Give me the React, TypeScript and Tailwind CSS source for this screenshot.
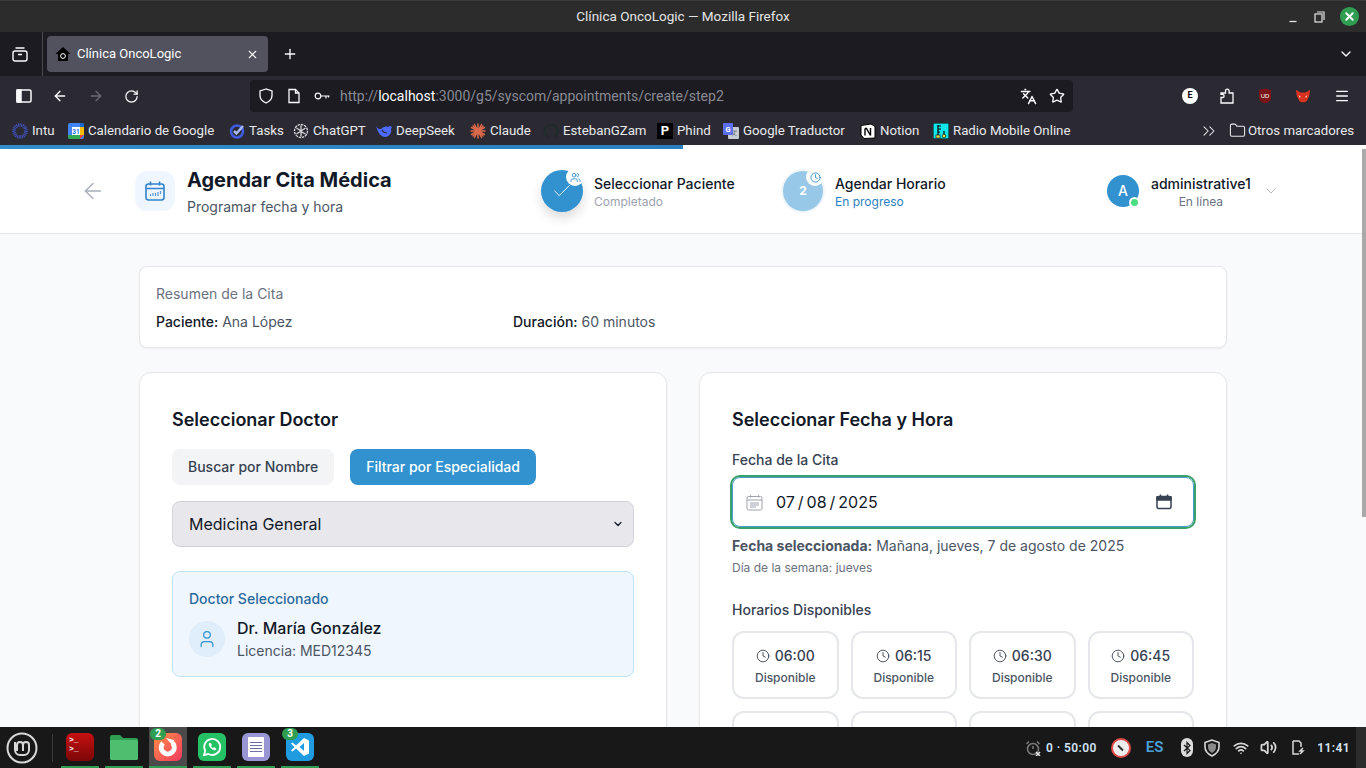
import {
  ArrowLeft,
  ArrowRight,
  Check,
  ChevronDown,
  ChevronsRight,
  Clock,
  Folder,
  Languages,
  Menu,
  Plus,
  RotateCw,
  Star,
  User,
  Users,
  Volume2,
  Wifi,
  X,
} from 'lucide-react';

const uiFont = "font-['Roboto',sans-serif]";

const bookmarks = [
  {
    name: 'Intu',
    w: 'w-[56px]',
    icon: (
      <svg width="16" height="16" viewBox="0 0 16 16" fill="none" stroke="#3f4fb8">
        <circle cx="8" cy="8" r="6" strokeWidth="3.5" strokeDasharray="1 0.6" />
      </svg>
    ),
  },
  {
    name: 'Calendario de Google',
    w: 'w-[161px]',
    icon: (
      <svg width="16" height="16" viewBox="0 0 16 16">
        <rect width="16" height="16" rx="2" fill="#4285f4" />
        <path d="M12 0h2a2 2 0 0 1 2 2v2h-4z" fill="#1967d2" />
        <path d="M12 4h4v8h-4z" fill="#fbbc04" />
        <path d="M0 12h12v4H2a2 2 0 0 1-2-2z" fill="#34a853" />
        <path d="M12 12h4l-4 4z" fill="#ea4335" />
        <rect x="4" y="4" width="8" height="8" fill="#fff" />
        <text x="8" y="10.500" textAnchor="middle" fontSize="6.500" fontWeight="700" fill="#1a73e8" fontFamily="Roboto">31</text>
      </svg>
    ),
  },
  {
    name: 'Tasks',
    w: 'w-[64px]',
    icon: (
      <svg width="16" height="16" viewBox="0 0 16 16" fill="none">
        <circle cx="8" cy="8.500" r="6" stroke="#3f5ce0" strokeWidth="2.500" />
        <path d="M5 8l2.500 2.500L14 3" stroke="#a9b8f5" strokeWidth="2.500" />
      </svg>
    ),
  },
  {
    name: 'ChatGPT',
    w: 'w-[83px]',
    icon: (
      <svg width="16" height="16" viewBox="0 0 16 16" fill="none" stroke="#d4d4d8" strokeWidth="1.300">
        <circle cx="8" cy="8" r="6.500" strokeDasharray="2.500 0.800" />
        <path d="M8 2.500v6l4.500 2.500M3.500 5l4.500 3-4.500 3M8 13.500V8l4.500-3" />
      </svg>
    ),
  },
  {
    name: 'DeepSeek',
    w: 'w-[94px]',
    icon: (
      <svg width="16" height="16" viewBox="0 0 16 16" fill="#4d6bfe">
        <path d="M0 3c2 3 3 3 5 3 2-2 5-3 7-2l2-1 2 1-1 2c1 4-2 8-6 8S2 10 0 3z" />
        <path d="M6 7c1 2 3 3 5 3" stroke="#2b2a33" strokeWidth="1.200" fill="none" />
      </svg>
    ),
  },
  {
    name: 'Claude',
    w: 'w-[73px]',
    icon: (
      <svg width="16" height="16" viewBox="0 0 16 16" stroke="#d9694a" strokeWidth="1.500" strokeLinecap="round">
        <path d="M8 1v14M1 8h14M3 3l10 10M13 3 3 13M4.500 1.500l7 13M11.500 1.500l-7 13M1.500 4.500l13 7M14.500 4.500l-13 7" />
      </svg>
    ),
  },
  {
    name: 'EstebanGZam',
    w: 'w-[114px]',
    icon: (
      <svg width="16" height="16" viewBox="0 0 16 16" fill="none" stroke="#1f2b2b" strokeWidth="2">
        <path d="M5 14a6.500 6.500 0 1 1 6 0" />
      </svg>
    ),
  },
  {
    name: 'Phind',
    w: 'w-[66px]',
    icon: (
      <span className="flex h-4 w-4 shrink-0 items-center justify-center bg-black text-[13px] font-bold leading-none text-white">P</span>
    ),
  },
  {
    name: 'Google Traductor',
    w: 'w-[137px]',
    icon: (
      <svg width="16" height="16" viewBox="0 0 16 16">
        <rect x="5" y="4" width="11" height="12" rx="1" fill="#c8ccd4" />
        <rect width="10" height="12" rx="1" fill="#5b6ff0" />
        <text x="5" y="9" textAnchor="middle" fontSize="7.500" fontWeight="700" fill="#fff" fontFamily="Roboto">G</text>
        <path d="M9.500 8h4.500M12 8c0 2-1 3.500-2.500 4.500M10 9.500c.5 1.500 2 3 3.500 3" stroke="#6b7280" strokeWidth="0.800" fill="none" />
      </svg>
    ),
  },
  {
    name: 'Notion',
    w: 'w-[73px]',
    icon: (
      <svg width="16" height="16" viewBox="0 0 16 16">
        <path d="M1 2.500 11 1l4 2.500V15L4 15.500 1 12z" fill="#fff" stroke="#000" strokeWidth="1" />
        <path d="M5 5.500v7M5 5.500h1.500l4 7M10.500 5v7.500" stroke="#000" strokeWidth="1.400" fill="none" />
      </svg>
    ),
  },
  {
    name: 'Radio Mobile Online',
    w: 'w-[142px]',
    icon: (
      <svg width="16" height="16" viewBox="0 0 16 16">
        <rect width="16" height="16" fill="#12e6ea" stroke="#000" />
        <path d="M5 2v10M5 3h3M5 6h3M5 9h2M11 8v5" stroke="#000" strokeWidth="1.200" fill="none" />
        <rect x="3" y="12" width="4" height="3" fill="#f4e04d" stroke="#000" strokeWidth="0.600" />
        <circle cx="11" cy="13" r="1.800" fill="#f4e04d" stroke="#000" strokeWidth="0.600" />
      </svg>
    ),
  },
];

const slots = ['06:00', '06:15', '06:30', '06:45'];

function TitleBar() {
  return (
    <div className="relative flex h-8 items-center justify-center border-t border-[#3a3a3a] bg-[#2c2c2c] text-[13.5px] text-[#e4e4e4]">
      Clínica OncoLogic — Mozilla Firefox
      <div className="absolute right-[7px] top-[6px] flex items-center gap-[15px] text-[#e4e4e4]">
        <svg width="12" height="12" viewBox="0 0 12 12" stroke="currentColor" strokeWidth="1.300">
          <path d="M2.500 10.500h7" />
        </svg>
        <svg width="11" height="12" viewBox="0 0 11 12" fill="none" stroke="currentColor" strokeWidth="1.200">
          <rect x="1" y="3" width="7" height="8" />
          <path d="M3 1h7v8" />
        </svg>
        <span className="flex h-[19px] w-[19px] items-center justify-center rounded-full bg-[#2f9e52] text-white">
          <X size={13} strokeWidth={3.5} />
        </span>
      </div>
    </div>
  );
}

function TabBar() {
  return (
    <div className="flex h-11 items-center bg-[#1c1b22] text-[#fbfbfe]">
      <div className="flex h-full w-[42px] shrink-0 items-center justify-center pr-[3px]">
        <svg width="16" height="16" viewBox="0 0 16 16" fill="none" stroke="currentColor" strokeWidth="1.400">
          <rect x="1" y="5" width="14" height="10" rx="2" />
          <path d="M3.500 2h9M6 8.500h4" />
        </svg>
      </div>
      <div className="h-full w-px bg-[#4a4a50]" />
      <div className="ml-1 flex h-9 w-[221px] items-center rounded bg-[#52525e] pl-2 pr-[9px] text-[13px]">
        <svg width="16" height="16" viewBox="0 0 16 16" className="mr-[6px] shrink-0" fill="#000">
          <path d="M8 1 0.500 8H3v7h10V8h2.500z" />
          <circle cx="8" cy="10" r="2.400" fill="none" stroke="#fff" strokeWidth="1" />
        </svg>
        <span className="flex-1">Clínica OncoLogic</span>
        <X size={13} strokeWidth={2} />
      </div>
      <Plus size={16} className="ml-[14px]" />
      <ChevronDown size={16} className="ml-auto mr-[12px]" />
    </div>
  );
}

function NavBar() {
  return (
    <div className="flex h-10 items-center bg-[#2b2a33] text-[#fbfbfe]">
      <svg width="16" height="16" viewBox="0 0 16 16" className="ml-4" fill="none" stroke="currentColor" strokeWidth="1.500">
        <rect x="1" y="2" width="14" height="12" rx="1.500" />
        <rect x="1" y="2" width="4" height="12" fill="currentColor" />
      </svg>
      <ArrowLeft size={16} className="ml-[20px]" />
      <ArrowRight size={16} className="ml-[20px] text-[#6b6a73]" />
      <RotateCw size={15} className="ml-[20px]" />
      <div className="ml-[111px] flex h-8 w-[823px] items-center rounded bg-[#1c1b22] pl-2 text-[14px]">
        <svg width="16" height="16" viewBox="0 0 16 16" fill="none" stroke="currentColor" strokeWidth="1.300">
          <path d="M8 1 2 3v4.500c0 3.500 2.500 6 6 7.500 3.500-1.500 6-4 6-7.500V3z" />
        </svg>
        <svg width="16" height="16" viewBox="0 0 16 16" className="ml-3" fill="none" stroke="currentColor" strokeWidth="1.300">
          <path d="M3 1.500h6.500l3.500 3.500v9.500H3zM9.500 1.500V5H13" />
        </svg>
        <svg width="16" height="16" viewBox="0 0 16 16" className="ml-3" fill="none" stroke="currentColor" strokeWidth="1.200">
          <circle cx="4" cy="8" r="2.800" />
          <path d="M7 8h8.500M12 8v2.500M14.500 8v1.500" />
        </svg>
        <span className="ml-[10px] text-[#8a8a92]">
          http://<span className="text-[#fbfbfe]">localhost</span>:3000/g5/syscom/appointments/create/step2
        </span>
        <Languages size={17} className="ml-auto" />
        <Star size={16} className="ml-[12px] mr-2" />
      </div>
      <div className="ml-auto mr-4 flex items-center gap-[22px]">
        <span className="flex h-4 w-4 items-center justify-center rounded-full bg-white text-[9px] font-bold text-black">E</span>
        <svg width="16" height="16" viewBox="0 0 16 16" className="-ml-px" fill="none" stroke="currentColor" strokeWidth="1.300">
          <path d="M2 15V9.500h1.500a1.600 1.600 0 0 0 0-3.200H2V5h4.500V3a1.800 1.800 0 0 1 3.600 0v2H14v10z" />
        </svg>
        <svg width="16" height="16" viewBox="0 0 16 16">
          <path d="M8 0.500 14 2v8c0 3-3 4.500-6 5.500C5 14.500 2 13 2 10V2z" fill="#7a1518" />
          <text x="8" y="10" textAnchor="middle" fontSize="6" fill="#fff" fontFamily="Liberation Sans">UD</text>
        </svg>
        <svg width="16" height="16" viewBox="0 0 18 16">
          <path d="M1 1l5 3h6l5-3-1 7-3 6-2 1H7l-2-1-3-6z" fill="#d9321f" />
          <path d="M4 7l3 2-2 1zM14 7l-3 2 2 1z" fill="#f7b9a8" />
        </svg>
        <Menu size={16} className="ml-px" />
      </div>
    </div>
  );
}

function BookmarksBar() {
  return (
    <div className="flex h-[29px] items-center bg-[#2b2a33] pl-3 pr-3 text-[13.25px] text-[#e9e9ec]">
      <div className="flex items-center">
        {bookmarks.map((b) => (
          <div key={b.name} className={`flex items-center gap-1 whitespace-nowrap ${b.w}`}>
            {b.icon}
            <span>{b.name}</span>
          </div>
        ))}
      </div>
      <ChevronsRight size={20} strokeWidth={1.25} className="ml-auto" />
      <Folder size={17} strokeWidth={1.5} className="ml-[10px]" />
      <span className="ml-[2px]">Otros marcadores</span>
    </div>
  );
}

function HeaderCalendar() {
  return (
    <svg width="22" height="22" viewBox="0 0 22 22" fill="none" stroke="#3182ce" strokeWidth="1.600">
      <rect x="2" y="4" width="18" height="16" rx="2.500" />
      <path d="M2 8.500h18M6.500 1.500v4M15.500 1.500v4" />
      <path d="M6.500 16v-2M9 16v-3M11.500 16v-3M14 16v-4M16.500 14v-3" strokeWidth="1.200" strokeOpacity="0.800" />
    </svg>
  );
}

function StepHeader() {
  return (
    <header className="flex h-[85px] shrink-0 items-center border-b border-[#e5e7eb] bg-white shadow-[0_1px_2px_rgba(0,0,0,0.05)]">
      <ArrowLeft size={26} strokeWidth={1.25} className="ml-[80px] text-[#a8adb7]" />
      <div className="ml-[29px] flex h-10 w-10 items-center justify-center rounded-xl bg-[#eff6ff]">
        <HeaderCalendar />
      </div>
      <div className="ml-3 mt-[1px] w-[354px]">
        <h1 className="text-xl font-bold leading-7 text-[#111827]">Agendar Cita Médica</h1>
        <p className="mt-[3px] text-sm leading-5 text-[#4b5563]">Programar fecha y hora</p>
      </div>

      <div className="relative flex h-[42px] w-[42px] items-center justify-center rounded-full bg-[#3292d0] text-white shadow-[0_6px_12px_rgba(0,0,0,0.14)]">
        <Check size={22} strokeWidth={1} />
        <span className="absolute -right-[1px] -top-[2px] flex h-[18px] w-[18px] items-center justify-center rounded-full bg-white">
          <Users size={11} className="text-[#3292d0]" />
        </span>
      </div>
      <div className="ml-[11px] mt-[2px] w-[189px]">
        <p className="text-sm font-medium leading-5 text-[#111827]">Seleccionar Paciente</p>
        <p className="text-xs leading-4 text-[#9ca3af]">Completado</p>
      </div>

      <div className="relative flex h-10 w-10 items-center justify-center rounded-full bg-[#97c8e7] text-xs font-bold text-white ring-2 ring-[#eff6fb]">
        2
        <span className="absolute -right-[1px] -top-[3px] flex h-[18px] w-[18px] items-center justify-center rounded-full bg-white">
          <Clock size={11} className="text-[#3292d0]" />
        </span>
      </div>
      <div className="ml-3 mt-[2px] w-[272px]">
        <p className="text-sm font-medium leading-5 text-[#111827]">Agendar Horario</p>
        <p className="text-xs leading-4 text-[#2b7fc0]">En progreso</p>
      </div>

      <div className="relative flex h-8 w-8 items-center justify-center rounded-full bg-[#3292d0] text-sm font-medium text-white">
        A
        <span className="absolute -bottom-[1px] -right-[1px] h-[11px] w-[11px] rounded-full border-2 border-white bg-[#4ade80]" />
      </div>
      <div className="ml-3 mt-[2px] text-center">
        <p className="text-sm font-medium leading-5 text-[#111827]">administrative1</p>
        <p className="text-xs leading-4 text-[#6b7280]">En línea</p>
      </div>
      <ChevronDown size={16} strokeWidth={1.25} className="ml-3 text-[#a8adb7]" />
    </header>
  );
}

function TimeSlot({ time }: { time: string }) {
  return (
    <div className="flex h-[68px] flex-col items-center rounded-xl border-2 border-[#e5e7eb] bg-white pt-[13px]">
      <div className="flex items-center gap-[5px] text-sm font-medium leading-5 text-[#374151]">
        <Clock size={14} strokeWidth={1.5} />
        {time}
      </div>
      <span className="mt-1 text-xs font-medium leading-4 text-[#4b5563]">Disponible</span>
    </div>
  );
}

function Content() {
  return (
    <main className="flex-1 overflow-hidden bg-[#f9fafb] pt-8">
      <div className="mx-auto w-[1088px]">
        <section className="h-[82px] rounded-lg border border-[#e5e7eb] bg-white px-4 pt-[17px] shadow-[0_1px_2px_rgba(0,0,0,0.05)]">
          <p className="text-sm leading-5 text-[#6b7280]">Resumen de la Cita</p>
          <div className="mt-2 grid grid-cols-[357px_1fr] text-sm leading-5 text-[#4b5563]">
            <p>
              <span className="font-medium text-[#111827]">Paciente:</span> Ana López
            </p>
            <p>
              <span className="font-medium text-[#111827]">Duración:</span> 60 minutos
            </p>
          </div>
        </section>

        <div className="mt-6 grid grid-cols-2 gap-8">
          <section className="h-[460px] rounded-xl border border-[#e5e7eb] bg-white p-8 shadow-[0_1px_2px_rgba(0,0,0,0.05)]">
            <h2 className="mt-[1px] text-lg font-semibold leading-7 text-[#111827]">Seleccionar Doctor</h2>
            <div className="mt-[15px] flex gap-4">
              <button className="h-9 rounded-lg bg-[#f3f4f6] px-4 text-sm font-medium text-[#374151]">Buscar por Nombre</button>
              <button className="h-9 rounded-lg bg-[#3292d0] px-4 text-sm font-medium text-white">Filtrar por Especialidad</button>
            </div>
            <div className="mt-4 flex h-[46px] items-center rounded-lg border border-[#d1d5db] bg-[#e8e7ec] pl-4 pr-[9px] text-base text-[#111827]">
              Medicina General
              <ChevronDown size={12} strokeWidth={2.5} className="ml-auto" />
            </div>
            <div className="mt-6 h-[106px] rounded-lg border border-[#bee3f8] bg-[#eff6fd] px-4 pt-[17px]">
              <p className="text-sm font-medium leading-5 text-[#2c6a9e]">Doctor Seleccionado</p>
              <div className="mt-[7px] flex items-center gap-3">
                <div className="flex h-9 w-9 items-center justify-center rounded-full bg-[#dfeefa]">
                  <User size={20} strokeWidth={1.5} className="text-[#3292d0]" />
                </div>
                <div>
                  <p className="text-base font-medium leading-6 text-[#111827]">Dr. María González</p>
                  <p className="mt-[1px] text-sm leading-5 text-[#4b5563]">Licencia: MED12345</p>
                </div>
              </div>
            </div>
          </section>

          <section className="h-[460px] rounded-xl border border-[#e5e7eb] bg-white p-8 shadow-[0_1px_2px_rgba(0,0,0,0.05)]">
            <h2 className="mt-[1px] text-lg font-semibold leading-7 text-[#111827]">Seleccionar Fecha y Hora</h2>
            <label className="mt-4 block text-sm font-medium leading-5 text-[#374151]">Fecha de la Cita</label>
            <div className="mt-[7px] flex h-[50px] items-center rounded-lg border border-[#4a9cd0] pl-[13px] pr-[21px] text-base text-[#111827] outline-2 outline-[#38a169]">
              <svg width="17" height="17" viewBox="0 0 17 17" fill="none" stroke="#9ca3af" strokeWidth="1">
                <rect x="1" y="2.500" width="15" height="13.500" rx="1.500" />
                <path d="M1 6h15M4.500 1v2.500M12.500 1v2.500M4 9h9M4 11h9M4 13h6" />
              </svg>
              <span className="ml-[13px] [word-spacing:-1.500px]">07 / 08 / 2025</span>
              <svg width="16" height="16" viewBox="0 0 16 16" className="ml-auto" fill="none" stroke="#374151" strokeWidth="1.500">
                <rect x="1" y="2.500" width="14" height="12" rx="1.500" />
                <path d="M1 3h14v3H1z" fill="#374151" />
                <path d="M4.500 0.500v2.500M11.500 0.500v2.500" />
              </svg>
            </div>
            <p className="mt-[9px] text-sm leading-5 text-[#4b5563]">
              <span className="font-bold">Fecha seleccionada:</span> Mañana, jueves, 7 de agosto de 2025
            </p>
            <p className="mt-1 text-xs leading-4 text-[#6b7280]">Día de la semana: jueves</p>
            <p className="mt-[24px] text-sm font-medium leading-5 text-[#374151]">Horarios Disponibles</p>
            <div className="mt-[11px] grid grid-cols-4 gap-3">
              {slots.map((t) => (
                <TimeSlot key={t} time={t} />
              ))}
              {slots.map((t) => (
                <TimeSlot key={`next-${t}`} time={t} />
              ))}
            </div>
          </section>
        </div>
      </div>
    </main>
  );
}

function AppIcon({ badge, active, children }: { badge?: string; active?: boolean; children: React.ReactNode }) {
  return (
    <div className={`relative flex h-[41px] w-[38px] items-center justify-center border-b-[2px] border-[#2f9e52] ${active ? 'bg-[#4a4a4a]' : ''}`}>
      {children}
      {badge && (
        <span className="absolute left-[1px] top-[1px] flex h-[12px] w-[16px] items-center justify-center rounded-full bg-[#2f9e52] text-[10px] font-bold leading-none text-white">
          {badge}
        </span>
      )}
    </div>
  );
}

function Taskbar() {
  return (
    <footer className={`flex h-[41px] shrink-0 items-center bg-[#181818] text-[#d8d8d8] ${uiFont}`}>
      <svg width="32" height="32" viewBox="0 0 32 32" fill="none" stroke="#d8d8d8" className="ml-[6px]">
        <circle cx="16" cy="16" r="14.500" strokeWidth="2" />
        <path d="M9 10v8a5 5 0 0 0 5 5h4a5 5 0 0 0 5-5v-5a3 3 0 0 0-6 0v6M17 13a3 3 0 0 0-6 0v6" strokeWidth="2" />
      </svg>
      <div className="ml-[14px] h-[28px] w-px bg-[#3a3a3a]" />
      <div className="ml-2 flex gap-[6px]">
        <AppIcon>
          <span className="h-[28px] w-[28px] rounded-md bg-gradient-to-b from-[#c81010] to-[#7c0707] pl-[3px] pt-[2px] font-['Liberation_Mono',monospace] text-[8px] font-bold leading-[9px] text-white">
            {'>_'}
            <br />
            {'>_'}
          </span>
        </AppIcon>
        <AppIcon>
          <svg width="28" height="26" viewBox="0 0 28 26">
            <path d="M0 3a2 2 0 0 1 2-2h8l3 3h13a2 2 0 0 1 2 2v4H0z" fill="#2f9e52" />
            <rect y="6" width="28" height="20" rx="1.500" fill="#4dbf6f" />
          </svg>
        </AppIcon>
        <AppIcon badge="2" active>
          <span className="flex h-[28px] w-[28px] items-center justify-center rounded-md bg-gradient-to-br from-[#ff8a3d] to-[#f0365f]">
            <svg width="22" height="22" viewBox="0 0 22 22" fill="none" stroke="#fff" strokeWidth="5">
              <path d="M15.500 7a6.500 6.500 0 1 1-9.500 0" />
              <path d="M9 2l8 2-1 6z" fill="#fff" stroke="none" />
            </svg>
          </span>
        </AppIcon>
        <AppIcon>
          <span className="flex h-[28px] w-[28px] items-center justify-center rounded-md bg-[#25c265] text-white">
            <svg width="20" height="20" viewBox="0 0 20 20" fill="none" stroke="#fff" strokeWidth="1.800">
              <path d="M2 18l1.200-4.200A8 8 0 1 1 6.400 17z" />
              <path d="M7 6.500c-.5 3 3.500 7 6.500 6.500l.5-1.500-2-1-1 .8c-1-.4-1.800-1.200-2.200-2.200l.8-1-1-2z" fill="#fff" strokeWidth="0.500" />
            </svg>
          </span>
        </AppIcon>
        <AppIcon>
          <span className="flex h-[28px] w-[28px] items-center justify-center rounded-md bg-[#9a96d6]">
            <span className="flex h-[20px] w-[16px] flex-col gap-[2px] bg-white px-[2px] pt-[5px]">
              <span className="h-px bg-[#6f6fa8]" />
              <span className="h-px bg-[#6f6fa8]" />
              <span className="h-px bg-[#6f6fa8]" />
              <span className="h-px bg-[#6f6fa8]" />
            </span>
          </span>
        </AppIcon>
        <AppIcon badge="3">
          <span className="flex h-[28px] w-[28px] items-center justify-center rounded-md bg-[#1f9ce0]">
            <svg width="20" height="20" viewBox="0 0 20 20" fill="#fff">
              <path d="M14 1l5 2.500v13L14 19 6 11.500 2.500 14.500 1 13.500 4.500 10 1 6.500l1.500-1L6 8.500zM14 6l-4.500 4 4.500 4z" />
            </svg>
          </span>
        </AppIcon>
      </div>

      <div className="ml-auto flex items-center">
        <svg width="16" height="16" viewBox="0 0 16 16" fill="none" stroke="#7a7a7a" strokeWidth="1.500">
          <circle cx="8" cy="9" r="5.500" />
          <path d="M1.500 4 4 1.500M14.500 4 12 1.500M8 6v3" />
          <path d="M11 12l4 4M15 12l-4 4" stroke="#e8e8e8" />
        </svg>
        <span className="ml-[5px] text-xs font-semibold tracking-[0.4px] text-[#cfe3f5]">0 · 50:00</span>
        <span className="ml-[14px] flex h-[20px] w-[20px] items-center justify-center rounded-full border-2 border-[#e24a4a] bg-[#eeeeee]">
          <span className="h-[2px] w-[7px] rotate-45 bg-[#333]" />
        </span>
        <span className="ml-[15px] text-[15px] font-semibold leading-none text-[#4aa3d8]">ES</span>
        <span className="ml-[18px] flex h-[19px] w-[12px] items-center justify-center rounded-full bg-[#dcdcdc]">
          <svg width="8" height="14" viewBox="0 0 8 14" fill="none" stroke="#181818" strokeWidth="1.200">
            <path d="M1 4l6 5.500L4 12.500V1.500l3 3L1 10" />
          </svg>
        </span>
        <svg width="16" height="18" viewBox="0 0 16 18" fill="none" stroke="#d8d8d8" strokeWidth="1.600" className="ml-[11px]">
          <path d="M8 1 1 3.500V8c0 4 3 7 7 9 4-2 7-5 7-9V3.500z" />
          <path d="M8 4 4 5.500V8c0 2.500 1.500 4.500 4 6 2.500-1.500 4-3.500 4-6V5.500z" fill="#8a8a8a" stroke="none" />
        </svg>
        <Wifi size={16} strokeWidth={2.5} className="ml-[13px]" />
        <Volume2 size={17} strokeWidth={2.5} className="ml-[11px]" />
        <svg width="16" height="17" viewBox="0 0 16 17" fill="none" stroke="currentColor" strokeWidth="1.500" className="ml-[13px]">
          <path d="M3 2h6l2 2v4M9 15H3V2M10 15l3-3h-3l3-3" />
        </svg>
        <span className="ml-[11px] text-xs font-semibold tracking-[0.4px] text-[#d9e6f2]">11:41</span>
        <div className="ml-[6px] h-[41px] w-[10px] bg-[#2c2c2c]" />
      </div>
    </footer>
  );
}

export default function App() {
  return (
    <div className={`relative flex h-[768px] w-[1366px] flex-col overflow-hidden ${uiFont}`}>
      <TitleBar />
      <TabBar />
      <NavBar />
      <BookmarksBar />
      <div className="h-1 w-full shrink-0 bg-white">
        <div className="h-full w-1/2 bg-gradient-to-r from-[#2f8ecb] to-[#2a7fc0]" />
      </div>
      <div className="relative flex min-h-0 flex-1 flex-col font-['Inter',sans-serif]">
        <StepHeader />
        <Content />
        {/* page scrollbar thumb */}
        <div className="absolute right-0 top-0 h-[368px] w-1 bg-[#a9a9a9]" />
      </div>
      <Taskbar />
    </div>
  );
}
